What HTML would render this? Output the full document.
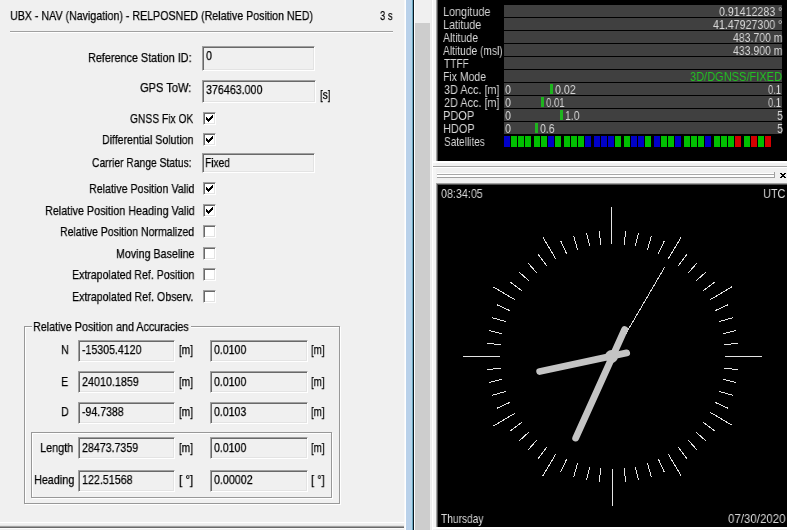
<!DOCTYPE html>
<html><head><meta charset="utf-8"><title>u-center</title><style>
html,body{margin:0;padding:0}
body{width:787px;height:530px;overflow:hidden;background:#f0f0f0;position:relative;font-family:"Liberation Sans",Arial,sans-serif;font-size:13px;line-height:14px;color:#000}
.t{position:absolute;white-space:nowrap;display:block;transform-origin:0 0;will-change:transform;-webkit-text-stroke:0.25px currentColor}
.w{-webkit-text-stroke:0}
.ed{position:absolute;box-sizing:border-box;background:#f0f0f0;border:1px solid;border-color:#a0a0a0 #fff #fff #a0a0a0;box-shadow:inset 1px 1px 0 #696969,inset -1px -1px 0 #e3e3e3}
.cb{position:absolute;box-sizing:border-box;width:13px;height:13px;background:#fff;border:1px solid;border-color:#a0a0a0 #fff #fff #a0a0a0;box-shadow:inset 1px 1px 0 #696969,inset -1px -1px 0 #e3e3e3}
.cb svg{position:absolute;left:-1px;top:-1px}
.hl{position:absolute;height:1px;background:#a0a0a0;border-bottom:1px solid #fff}
.bl{position:absolute;height:2px;background:#fff;border-bottom:2px solid #808080}
.gb{position:absolute;box-sizing:border-box;border:1px solid #989898;box-shadow:inset 1px 1px 0 #fff,1px 1px 0 #fff}
.gbt{position:absolute;background:#f0f0f0}
.bar{position:absolute;left:504px;width:278px;height:12px;background:#404040}
</style></head><body>
<span class="t" style="left:9.78px;top:9px;transform:scaleX(0.8197)">UBX - NAV (Navigation) - RELPOSNED (Relative Position NED)</span>
<span class="t" style="left:380.00px;top:9px;transform:scaleX(0.7286)">3 s</span>
<div class="hl" style="left:10px;top:31px;width:383px"></div>
<span class="t" style="left:87.57px;top:51px;transform:scaleX(0.8331)">Reference Station ID:</span>
<div class="ed" style="left:202px;top:46px;width:113px;height:25px"></div>
<span class="t" style="left:205.63px;top:49px;transform:scaleX(0.8200)">0</span>
<span class="t" style="left:139.50px;top:81px;transform:scaleX(0.8541)">GPS ToW:</span>
<div class="ed" style="left:202px;top:80px;width:114px;height:23px"></div>
<span class="t" style="left:205.80px;top:83px;transform:scaleX(0.8210)">376463.000</span>
<span class="t" style="left:319.70px;top:88px;transform:scaleX(0.7703)">[s]</span>
<span class="t" style="left:129.60px;top:112px;transform:scaleX(0.7888)">GNSS Fix OK</span>
<div class="cb" style="left:203px;top:112px"><svg width="13" height="13" viewBox="0 0 13 13"><path d="M3 5v3l2 2 5-5V2L5 7z" fill="#000" shape-rendering="crispEdges"/></svg></div>
<span class="t" style="left:101.79px;top:133px;transform:scaleX(0.8134)">Differential Solution</span>
<div class="cb" style="left:203px;top:133px"><svg width="13" height="13" viewBox="0 0 13 13"><path d="M3 5v3l2 2 5-5V2L5 7z" fill="#000" shape-rendering="crispEdges"/></svg></div>
<span class="t" style="left:91.90px;top:156px;transform:scaleX(0.7921)">Carrier Range Status:</span>
<div class="ed" style="left:202px;top:153px;width:113px;height:20px"></div>
<span class="t" style="left:205.21px;top:156px;transform:scaleX(0.7854)">Fixed</span>
<span class="t" style="left:88.98px;top:182px;transform:scaleX(0.8203)">Relative Position Valid</span>
<div class="cb" style="left:203px;top:182px"><svg width="13" height="13" viewBox="0 0 13 13"><path d="M3 5v3l2 2 5-5V2L5 7z" fill="#000" shape-rendering="crispEdges"/></svg></div>
<span class="t" style="left:44.57px;top:204px;transform:scaleX(0.8293)">Relative Position Heading Valid</span>
<div class="cb" style="left:203px;top:204px"><svg width="13" height="13" viewBox="0 0 13 13"><path d="M3 5v3l2 2 5-5V2L5 7z" fill="#000" shape-rendering="crispEdges"/></svg></div>
<span class="t" style="left:60.09px;top:225px;transform:scaleX(0.8069)">Relative Position Normalized</span>
<div class="cb" style="left:203px;top:225px"></div>
<span class="t" style="left:115.78px;top:247px;transform:scaleX(0.8220)">Moving Baseline</span>
<div class="cb" style="left:203px;top:247px"></div>
<span class="t" style="left:71.79px;top:268px;transform:scaleX(0.8143)">Extrapolated Ref. Position</span>
<div class="cb" style="left:203px;top:268px"></div>
<span class="t" style="left:71.78px;top:290px;transform:scaleX(0.8164)">Extrapolated Ref. Observ.</span>
<div class="cb" style="left:203px;top:290px"></div>
<div class="gb" style="left:24px;top:326px;width:316px;height:178px"></div>
<div class="gbt" style="left:32px;top:320px;width:159px;height:14px"></div>
<span class="t" style="left:32.87px;top:320px;transform:scaleX(0.8262)">Relative Position and Accuracies</span>
<div class="gb" style="left:31px;top:432px;width:301px;height:66px"></div>
<span class="t" style="left:61.15px;top:343px;transform:scaleX(0.8200)">N</span>
<div class="ed" style="left:78px;top:340px;width:97px;height:22px"></div>
<span class="t" style="left:81.90px;top:343px;transform:scaleX(0.8148)">-15305.4120</span>
<span class="t" style="left:178.70px;top:343px;transform:scaleX(0.7740)">[m]</span>
<div class="ed" style="left:210px;top:340px;width:98px;height:22px"></div>
<span class="t" style="left:213.90px;top:343px;transform:scaleX(0.8120)">0.0100</span>
<span class="t" style="left:311.00px;top:343px;transform:scaleX(0.7454)">[m]</span>
<span class="t" style="left:60.70px;top:375px;transform:scaleX(0.8200)">E</span>
<div class="ed" style="left:78px;top:371px;width:97px;height:22px"></div>
<span class="t" style="left:81.90px;top:375px;transform:scaleX(0.8269)">24010.1859</span>
<span class="t" style="left:178.70px;top:375px;transform:scaleX(0.7740)">[m]</span>
<div class="ed" style="left:210px;top:371px;width:98px;height:22px"></div>
<span class="t" style="left:213.90px;top:375px;transform:scaleX(0.8120)">0.0100</span>
<span class="t" style="left:311.00px;top:375px;transform:scaleX(0.7454)">[m]</span>
<span class="t" style="left:61.15px;top:405px;transform:scaleX(0.8200)">D</span>
<div class="ed" style="left:78px;top:402px;width:97px;height:22px"></div>
<span class="t" style="left:81.90px;top:405px;transform:scaleX(0.8123)">-94.7388</span>
<span class="t" style="left:178.70px;top:405px;transform:scaleX(0.7740)">[m]</span>
<div class="ed" style="left:210px;top:402px;width:98px;height:22px"></div>
<span class="t" style="left:213.90px;top:405px;transform:scaleX(0.8120)">0.0103</span>
<span class="t" style="left:311.00px;top:405px;transform:scaleX(0.7454)">[m]</span>
<span class="t" style="left:39.76px;top:441px;transform:scaleX(0.8357)">Length</span>
<div class="ed" style="left:78px;top:437px;width:97px;height:22px"></div>
<span class="t" style="left:81.90px;top:441px;transform:scaleX(0.8166)">28473.7359</span>
<span class="t" style="left:178.70px;top:441px;transform:scaleX(0.7740)">[m]</span>
<div class="ed" style="left:210px;top:437px;width:98px;height:22px"></div>
<span class="t" style="left:213.90px;top:441px;transform:scaleX(0.8120)">0.0100</span>
<span class="t" style="left:311.00px;top:441px;transform:scaleX(0.7454)">[m]</span>
<span class="t" style="left:33.77px;top:473px;transform:scaleX(0.8327)">Heading</span>
<div class="ed" style="left:78px;top:470px;width:97px;height:22px"></div>
<span class="t" style="left:81.90px;top:473px;transform:scaleX(0.8232)">122.51568</span>
<span class="t" style="left:178.70px;top:473px;transform:scaleX(0.8754)">[ °]</span>
<div class="ed" style="left:210px;top:470px;width:98px;height:22px"></div>
<span class="t" style="left:213.90px;top:473px;transform:scaleX(0.8233)">0.00002</span>
<span class="t" style="left:311.00px;top:473px;transform:scaleX(0.8429)">[ °]</span>
<div style="position:absolute;left:0;top:522px;width:404px;height:1px;background:#fff"></div>
<div style="position:absolute;left:0;top:525px;width:404px;height:1px;background:#e3e3e3"></div>
<div style="position:absolute;left:0;top:526px;width:404px;height:1px;background:#a0a0a0"></div>
<div style="position:absolute;left:0;top:527px;width:404px;height:1px;background:#696969"></div>
<div style="position:absolute;left:0;top:528px;width:404px;height:1px;background:#fbfbfb"></div>
<div style="position:absolute;left:404px;top:0;width:1px;height:530px;background:#f8f8f8"></div>
<div style="position:absolute;left:405px;top:0;width:1px;height:530px;background:#fff"></div>
<div style="position:absolute;left:406px;top:0;width:5px;height:530px;background:#b9d1ea"></div>
<div style="position:absolute;left:411px;top:0;width:1px;height:530px;background:#b0d6ea"></div>
<div style="position:absolute;left:412px;top:0;width:1px;height:530px;background:#6aa5c0"></div>
<div style="position:absolute;left:413px;top:0;width:1px;height:530px;background:#0a1820"></div>
<div style="position:absolute;left:414px;top:0;width:1px;height:530px;background:#fff"></div>
<div style="position:absolute;left:431px;top:0;width:1px;height:530px;background:#ececec"></div>
<div style="position:absolute;left:432px;top:0;width:1px;height:530px;background:#fff"></div>
<div style="position:absolute;left:433px;top:0;width:3px;height:530px;background:#f4f4f4"></div>
<div style="position:absolute;left:415px;top:23px;width:15px;height:507px;background:#cdcdcd"></div>
<div style="position:absolute;left:437px;top:0;width:350px;height:161px;background:#000;border-left:1px solid #505050;box-sizing:border-box;box-shadow:-1px 0 0 #a0a0a0"></div>
<div style="position:absolute;left:433px;top:161px;width:354px;height:2px;background:#fff"></div>
<div class="bar" style="top:5px"></div>
<span class="t w" style="left:442.87px;top:5px;color:#d6d6d6;transform:scaleX(0.8286)">Longitude</span>
<span class="t w" style="left:718.70px;top:5px;color:#d6d6d6;transform:scaleX(0.8177)">0.91412283 °</span>
<div class="bar" style="top:18px"></div>
<span class="t w" style="left:442.87px;top:18px;color:#d6d6d6;transform:scaleX(0.8283)">Latitude</span>
<span class="t w" style="left:712.70px;top:18px;color:#d6d6d6;transform:scaleX(0.8187)">41.47927300 °</span>
<div class="bar" style="top:31px"></div>
<span class="t w" style="left:443.20px;top:31px;color:#d6d6d6;transform:scaleX(0.8068)">Altitude</span>
<span class="t w" style="left:733.10px;top:31px;color:#d6d6d6;transform:scaleX(0.8069)">483.700 m</span>
<div class="bar" style="top:44px"></div>
<span class="t w" style="left:443.20px;top:44px;color:#d6d6d6;transform:scaleX(0.7866)">Altitude (msl)</span>
<span class="t w" style="left:733.10px;top:44px;color:#d6d6d6;transform:scaleX(0.8069)">433.900 m</span>
<div class="bar" style="top:57px"></div>
<span class="t w" style="left:444.00px;top:57px;color:#d6d6d6;transform:scaleX(0.7825)">TTFF</span>
<div class="bar" style="top:70px"></div>
<span class="t w" style="left:443.20px;top:70px;color:#d6d6d6;transform:scaleX(0.8041)">Fix Mode</span>
<div class="bar" style="top:83px"></div>
<span class="t w" style="left:443.70px;top:83px;color:#d6d6d6;transform:scaleX(0.8353)">3D Acc. [m]</span>
<div class="bar" style="top:96px"></div>
<span class="t w" style="left:443.70px;top:96px;color:#d6d6d6;transform:scaleX(0.8353)">2D Acc. [m]</span>
<div class="bar" style="top:109px"></div>
<span class="t w" style="left:442.85px;top:109px;color:#d6d6d6;transform:scaleX(0.8473)">PDOP</span>
<div class="bar" style="top:122px"></div>
<span class="t w" style="left:442.86px;top:122px;color:#d6d6d6;transform:scaleX(0.8415)">HDOP</span>
<span class="t w" style="left:443.70px;top:135px;color:#d6d6d6;transform:scaleX(0.7737)">Satellites</span>
<span class="t w" style="left:689.70px;top:70px;color:#22c422;transform:scaleX(0.8493)">3D/DGNSS/FIXED</span>
<span class="t w" style="left:504.73px;top:83px;color:#d6d6d6;transform:scaleX(0.8200)">0</span>
<div style="position:absolute;left:550px;top:84px;width:3px;height:10px;background:#1fb41f"></div>
<span class="t w" style="left:554.60px;top:83px;color:#d6d6d6;transform:scaleX(0.8216)">0.02</span>
<span class="t w" style="left:767.80px;top:83px;color:#d6d6d6;transform:scaleX(0.7230)">0.1</span>
<span class="t w" style="left:504.73px;top:96px;color:#d6d6d6;transform:scaleX(0.8200)">0</span>
<div style="position:absolute;left:541px;top:97px;width:3px;height:10px;background:#1fb41f"></div>
<span class="t w" style="left:545.70px;top:96px;color:#d6d6d6;transform:scaleX(0.7379)">0.01</span>
<span class="t w" style="left:767.80px;top:96px;color:#d6d6d6;transform:scaleX(0.7230)">0.1</span>
<span class="t w" style="left:504.73px;top:109px;color:#d6d6d6;transform:scaleX(0.8200)">0</span>
<div style="position:absolute;left:560px;top:110px;width:3px;height:10px;background:#1fb41f"></div>
<span class="t w" style="left:565.00px;top:109px;color:#d6d6d6;transform:scaleX(0.8071)">1.0</span>
<span class="t w" style="left:776.58px;top:109px;color:#d6d6d6;transform:scaleX(0.8200)">5</span>
<span class="t w" style="left:504.73px;top:122px;color:#d6d6d6;transform:scaleX(0.8200)">0</span>
<div style="position:absolute;left:535px;top:123px;width:3px;height:10px;background:#1fb41f"></div>
<span class="t w" style="left:540.00px;top:122px;color:#d6d6d6;transform:scaleX(0.8071)">0.6</span>
<span class="t w" style="left:776.58px;top:122px;color:#d6d6d6;transform:scaleX(0.8200)">5</span>
<div style="position:absolute;left:504px;top:136px;width:6px;height:11px;background:#0000c8"></div>
<div style="position:absolute;left:511px;top:136px;width:6px;height:11px;background:#00c000"></div>
<div style="position:absolute;left:518px;top:136px;width:6px;height:11px;background:#00c000"></div>
<div style="position:absolute;left:525px;top:136px;width:6px;height:11px;background:#00c000"></div>
<div style="position:absolute;left:534px;top:136px;width:6px;height:11px;background:#00c000"></div>
<div style="position:absolute;left:541px;top:136px;width:6px;height:11px;background:#00c000"></div>
<div style="position:absolute;left:548px;top:136px;width:6px;height:11px;background:#0000c8"></div>
<div style="position:absolute;left:555px;top:136px;width:6px;height:11px;background:#00c000"></div>
<div style="position:absolute;left:564px;top:136px;width:6px;height:11px;background:#00c000"></div>
<div style="position:absolute;left:571px;top:136px;width:6px;height:11px;background:#00c000"></div>
<div style="position:absolute;left:578px;top:136px;width:6px;height:11px;background:#00c000"></div>
<div style="position:absolute;left:585px;top:136px;width:6px;height:11px;background:#0000c8"></div>
<div style="position:absolute;left:594px;top:136px;width:6px;height:11px;background:#0000c8"></div>
<div style="position:absolute;left:601px;top:136px;width:6px;height:11px;background:#0000c8"></div>
<div style="position:absolute;left:608px;top:136px;width:6px;height:11px;background:#0000c8"></div>
<div style="position:absolute;left:615px;top:136px;width:6px;height:11px;background:#00c000"></div>
<div style="position:absolute;left:624px;top:136px;width:6px;height:11px;background:#00c000"></div>
<div style="position:absolute;left:631px;top:136px;width:6px;height:11px;background:#0000c8"></div>
<div style="position:absolute;left:638px;top:136px;width:6px;height:11px;background:#0000c8"></div>
<div style="position:absolute;left:645px;top:136px;width:6px;height:11px;background:#00c000"></div>
<div style="position:absolute;left:654px;top:136px;width:6px;height:11px;background:#0000c8"></div>
<div style="position:absolute;left:661px;top:136px;width:6px;height:11px;background:#00c000"></div>
<div style="position:absolute;left:668px;top:136px;width:6px;height:11px;background:#00c000"></div>
<div style="position:absolute;left:675px;top:136px;width:6px;height:11px;background:#0000c8"></div>
<div style="position:absolute;left:684px;top:136px;width:6px;height:11px;background:#00c000"></div>
<div style="position:absolute;left:691px;top:136px;width:6px;height:11px;background:#00c000"></div>
<div style="position:absolute;left:698px;top:136px;width:6px;height:11px;background:#00c000"></div>
<div style="position:absolute;left:705px;top:136px;width:6px;height:11px;background:#0000c8"></div>
<div style="position:absolute;left:714px;top:136px;width:6px;height:11px;background:#00c000"></div>
<div style="position:absolute;left:721px;top:136px;width:6px;height:11px;background:#00c000"></div>
<div style="position:absolute;left:728px;top:136px;width:6px;height:11px;background:#00c000"></div>
<div style="position:absolute;left:735px;top:136px;width:6px;height:11px;background:#d40000"></div>
<div style="position:absolute;left:744px;top:136px;width:6px;height:11px;background:#00c000"></div>
<div style="position:absolute;left:751px;top:136px;width:6px;height:11px;background:#d40000"></div>
<div style="position:absolute;left:758px;top:136px;width:6px;height:11px;background:#00c000"></div>
<div style="position:absolute;left:765px;top:136px;width:6px;height:11px;background:#d40000"></div>
<div style="position:absolute;left:433px;top:166px;width:354px;height:1px;background:#a0a0a0"></div>
<div style="position:absolute;left:433px;top:167px;width:354px;height:1px;background:#fff"></div>
<div style="position:absolute;left:437px;top:172px;width:338px;height:6px;box-sizing:border-box;border-right:1px solid #a0a0a0;background:linear-gradient(#f0f0f0 0,#f0f0f0 1px,#fff 1px,#fff 2px,#a8a8a8 2px,#a8a8a8 3px,#fff 3px,#fff 5px,#a0a0a0 5px,#a0a0a0 6px)"></div>
<svg style="position:absolute;left:780px;top:173px" width="6" height="5" viewBox="0 0 6 5" shape-rendering="crispEdges"><path d="M0 0h2v1h-2zM4 0h2v1h-2zM1 1h4v1h-4zM2 2h2v1h-2zM1 3h4v1h-4zM0 4h2v1h-2zM4 4h2v1h-2z" fill="#000"/></svg>
<div style="position:absolute;left:437px;top:184px;width:350px;height:343px;background:#000;border-left:1px solid #505050;border-top:1px solid #505050;box-sizing:border-box;box-shadow:-1px 0 0 #a0a0a0,0 -1px 0 #a0a0a0,-1px -1px 0 #a0a0a0"></div>
<div style="position:absolute;left:433px;top:527px;width:354px;height:2px;background:#fff"></div>
<span class="t w" style="left:440.70px;top:187px;color:#d6d6d6;transform:scaleX(0.8258)">08:34:05</span>
<span class="t w" style="left:763.06px;top:187px;color:#d6d6d6;transform:scaleX(0.8370)">UTC</span>
<span class="t w" style="left:441.10px;top:512px;color:#d6d6d6;transform:scaleX(0.7826)">Thursday</span>
<span class="t w" style="left:727.70px;top:512px;color:#d6d6d6;transform:scaleX(0.8853)">07/30/2020</span>
<svg style="position:absolute;left:437px;top:183px" width="350" height="344" viewBox="437 183 350 344"><g stroke="#e4e4e4" stroke-width="1" stroke-linecap="square" shape-rendering="crispEdges"><line x1="611.50" y1="243.50" x2="611.50" y2="207.50"/><line x1="624.50" y1="244.50" x2="625.43" y2="231.50"/><line x1="635.50" y1="245.50" x2="638.28" y2="233.47"/><line x1="647.50" y1="249.50" x2="651.23" y2="236.46"/><line x1="658.50" y1="253.50" x2="664.08" y2="241.41"/><line x1="668.50" y1="258.50" x2="680.99" y2="237.36"/><line x1="678.50" y1="265.50" x2="686.90" y2="254.30"/><line x1="688.50" y1="272.50" x2="696.83" y2="263.24"/><line x1="696.50" y1="280.50" x2="705.76" y2="272.17"/><line x1="703.50" y1="290.50" x2="714.70" y2="282.10"/><line x1="710.50" y1="299.50" x2="731.64" y2="287.01"/><line x1="715.50" y1="310.50" x2="727.59" y2="304.92"/><line x1="719.50" y1="321.50" x2="732.54" y2="317.77"/><line x1="723.50" y1="333.50" x2="735.53" y2="330.72"/><line x1="724.50" y1="344.50" x2="737.50" y2="343.57"/><line x1="725.50" y1="356.50" x2="761.50" y2="356.50"/><line x1="724.50" y1="368.50" x2="737.50" y2="369.43"/><line x1="723.50" y1="379.50" x2="735.53" y2="382.28"/><line x1="719.50" y1="391.50" x2="732.54" y2="395.23"/><line x1="715.50" y1="402.50" x2="727.59" y2="408.08"/><line x1="710.50" y1="412.50" x2="731.64" y2="424.99"/><line x1="703.50" y1="422.50" x2="714.70" y2="430.90"/><line x1="696.50" y1="432.50" x2="705.76" y2="440.83"/><line x1="688.50" y1="440.50" x2="696.83" y2="449.76"/><line x1="678.50" y1="447.50" x2="686.90" y2="458.70"/><line x1="668.50" y1="454.50" x2="680.99" y2="475.64"/><line x1="658.50" y1="459.50" x2="664.08" y2="471.59"/><line x1="647.50" y1="463.50" x2="651.23" y2="476.54"/><line x1="635.50" y1="467.50" x2="638.28" y2="479.53"/><line x1="624.50" y1="468.50" x2="625.43" y2="481.50"/><line x1="612.50" y1="469.50" x2="612.50" y2="505.50"/><line x1="600.50" y1="468.50" x2="599.57" y2="481.50"/><line x1="589.50" y1="467.50" x2="586.72" y2="479.53"/><line x1="577.50" y1="463.50" x2="573.77" y2="476.54"/><line x1="566.50" y1="459.50" x2="560.92" y2="471.59"/><line x1="555.50" y1="454.50" x2="543.01" y2="475.64"/><line x1="546.50" y1="447.50" x2="538.10" y2="458.70"/><line x1="536.50" y1="440.50" x2="528.17" y2="449.76"/><line x1="528.50" y1="432.50" x2="519.24" y2="440.83"/><line x1="521.50" y1="422.50" x2="510.30" y2="430.90"/><line x1="514.50" y1="413.50" x2="493.36" y2="425.99"/><line x1="509.50" y1="402.50" x2="497.41" y2="408.08"/><line x1="505.50" y1="391.50" x2="492.46" y2="395.23"/><line x1="501.50" y1="379.50" x2="489.47" y2="382.28"/><line x1="500.50" y1="368.50" x2="487.50" y2="369.43"/><line x1="499.50" y1="356.50" x2="463.50" y2="356.50"/><line x1="500.50" y1="344.50" x2="487.50" y2="343.57"/><line x1="501.50" y1="333.50" x2="489.47" y2="330.72"/><line x1="505.50" y1="321.50" x2="492.46" y2="317.77"/><line x1="509.50" y1="310.50" x2="497.41" y2="304.92"/><line x1="514.50" y1="299.50" x2="493.36" y2="287.01"/><line x1="521.50" y1="290.50" x2="510.30" y2="282.10"/><line x1="528.50" y1="280.50" x2="519.24" y2="272.17"/><line x1="536.50" y1="272.50" x2="528.17" y2="263.24"/><line x1="546.50" y1="265.50" x2="538.10" y2="254.30"/><line x1="555.50" y1="258.50" x2="543.01" y2="237.36"/><line x1="566.50" y1="253.50" x2="560.92" y2="241.41"/><line x1="577.50" y1="249.50" x2="573.77" y2="236.46"/><line x1="589.50" y1="245.50" x2="586.72" y2="233.47"/><line x1="600.50" y1="244.50" x2="599.57" y2="231.50"/></g><line x1="612.50" y1="356.50" x2="664.47" y2="267.57" stroke="#d8d8d8" stroke-width="1" stroke-linecap="round" shape-rendering="crispEdges"/><line x1="626.68" y1="352.86" x2="539.66" y2="371.52" stroke="#c4c4c4" stroke-width="6.8" stroke-linecap="round"/><line x1="624.68" y1="329.52" x2="575.67" y2="438.07" stroke="#c4c4c4" stroke-width="6.8" stroke-linecap="round"/><circle cx="611.5" cy="356.5" r="6.5" fill="#c4c4c4"/></svg>
</body></html>
